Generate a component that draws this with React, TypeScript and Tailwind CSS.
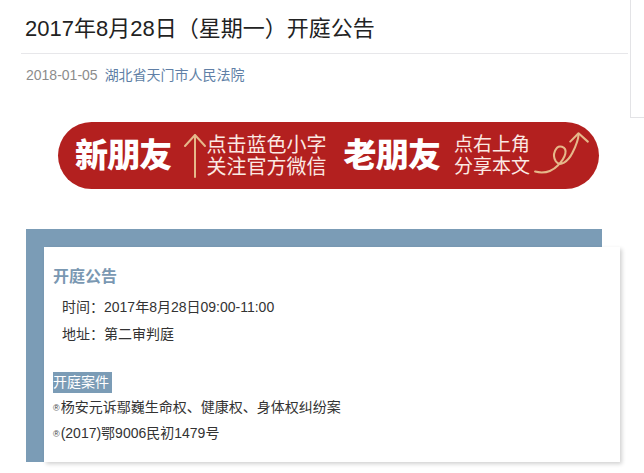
const font = "font-['Liberation_Sans','Noto_Sans_CJK_SC',sans-serif]";

const UpArrow = () => (
  <svg width="24" height="46" viewBox="0 0 24 46" className="shrink-0">
    <path d="M12 2 V44 M2 13 L12 2 L22 13" fill="none" stroke="#e6b88a" strokeWidth="2" strokeLinecap="round" strokeLinejoin="round" />
  </svg>
);

const SwirlArrow = () => (
  <svg width="60" height="50" viewBox="0 0 58 48" className="shrink-0">
    <path
      d="M2 42 C10 44 18 42 24 36 C32 28 34 20 28 18 C22 16 18 26 22 32 C26 38 34 32 38 24 C42 16 44 10 44 6"
      fill="none"
      stroke="#e6b88a"
      strokeWidth="2"
      strokeLinecap="round"
    />
    <path d="M36 13 L44 5 L53 13" fill="none" stroke="#e6b88a" strokeWidth="2" strokeLinecap="round" strokeLinejoin="round" />
  </svg>
);

const Banner = () => (
  <div className="ml-[58px] mt-[37px] flex h-[67px] w-[541px] items-center rounded-full bg-[#b3201f] pl-[17px] text-white">
    <span className="text-[33px] font-black leading-none tracking-tight">新朋友</span>
    <div className="ml-[11px]">
      <UpArrow />
    </div>
    <div className="text-[20px] leading-[22px] text-[#fbe9e3]">
      <div>点击蓝色小字</div>
      <div>关注官方微信</div>
    </div>
    <span className="ml-[17px] text-[33px] font-black leading-none tracking-tight">老朋友</span>
    <div className="ml-[14px] text-[19px] leading-[22px] text-[#fbe9e3]">
      <div>点右上角</div>
      <div>分享本文</div>
    </div>
    <div className="ml-[3px] mt-[-6px]">
      <SwirlArrow />
    </div>
  </div>
);

const Notice = () => (
  <div className="ml-[5px] mt-[40px] w-[576px] bg-[#7b9cb6] pl-[18px] pt-[18px]">
    <div className="mb-[-19px] h-[215px] w-[576px] bg-white pl-[9px] pt-[18px] text-[14px] text-[#333] shadow-[2px_2px_4px_rgba(0,0,0,0.18)]">
      <div className="text-[16px] font-bold leading-[24px] text-[#7a98b2]">开庭公告</div>
      <div className="mt-[5px] pl-[9px] leading-[27px]">
        <div>时间：2017年8月28日09:00-11:00</div>
        <div>地址：第二审判庭</div>
      </div>
      <div className="mt-[24px] inline-block bg-[#7b9cb6] pr-[3px] leading-[21px] text-white">开庭案件</div>
      <div className="mt-[2px] leading-[25px]">
        <div>
          <span className="mr-[1px] align-middle text-[9px] text-[#444]">®</span>杨安元诉鄢巍生命权、健康权、身体权纠纷案
        </div>
        <div>
          <span className="mr-[1px] align-middle text-[9px] text-[#444]">®</span>(2017)鄂9006民初1479号
        </div>
      </div>
    </div>
  </div>
);

export default function App() {
  return (
    <div className={`relative h-[473px] w-[644px] overflow-hidden bg-white ${font}`}>
      <div className="absolute left-[630px] top-[-1px] h-[119px] w-[30px] border-b border-l border-[#e3e3e6]" />
      <div className="ml-[21px] w-[607px]">
        <h1 className="border-b border-[#e7e7ea] pb-[9px] pl-[4px] pt-[14px] text-[22px] leading-[30px] text-[#222]">
          2017年8月28日（星期一）开庭公告
        </h1>
        <div className="mt-[11px] pl-[5px] text-[14px] leading-[20px]">
          <span className="text-[#8c8c8c]">2018-01-05</span>
          <span className="ml-[7px] text-[#607fa6]">湖北省天门市人民法院</span>
        </div>
      </div>
      <Banner />
      <div className="ml-[21px]">
        <Notice />
      </div>
    </div>
  );
}
